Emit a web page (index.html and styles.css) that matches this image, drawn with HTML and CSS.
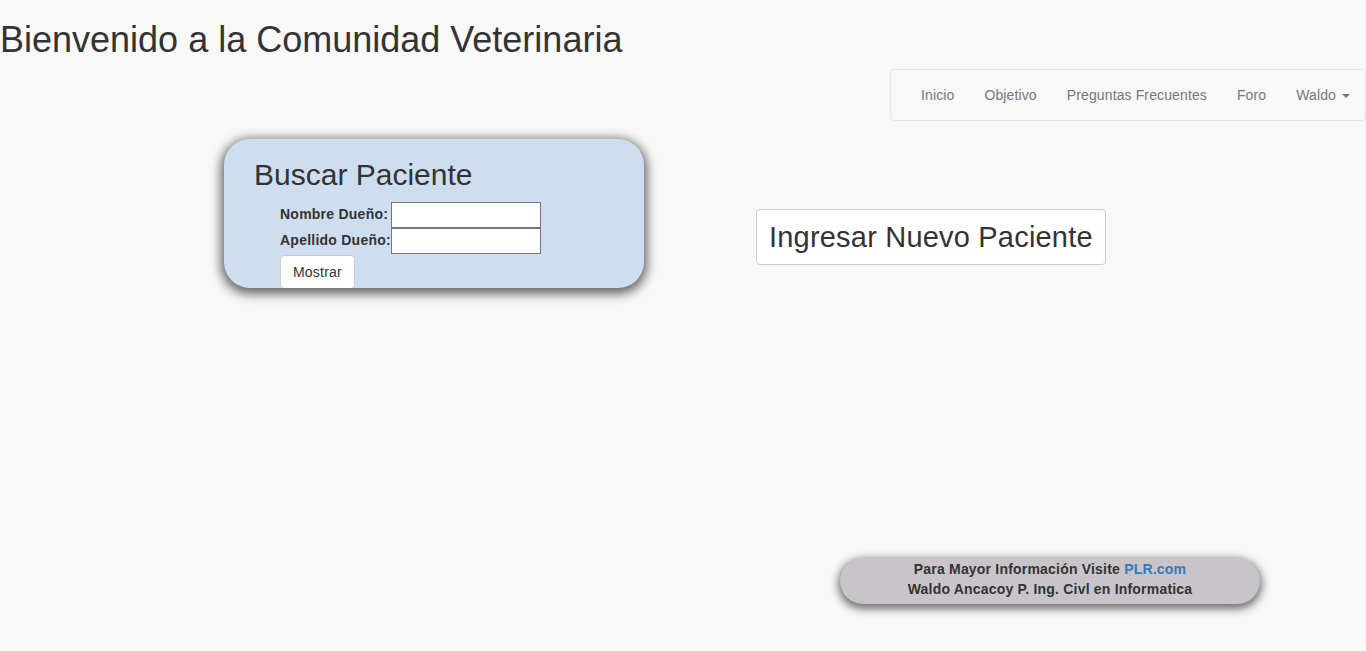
FILE: index.html
```html
<!DOCTYPE html>
<html lang="es">
<head>
<meta charset="utf-8">
<title>Comunidad Veterinaria</title>
<link rel="stylesheet" href="styles.css">
</head>
<body>
<h1 class="title">Bienvenido a la Comunidad Veterinaria</h1>
<div class="nav-row">
  <nav class="navbar">
    <ul class="nav">
      <li><a href="#">Inicio</a></li>
      <li><a href="#">Objetivo</a></li>
      <li><a href="#">Preguntas Frecuentes</a></li>
      <li><a href="#">Foro</a></li>
      <li><a href="#">Waldo <span class="caret"></span></a></li>
    </ul>
  </nav>
</div>
<div class="main-row">
  <div class="search-card">
    <h2 class="card-title">Buscar Paciente</h2>
    <form class="search-form">
      <div class="fields">
        <label>Nombre Dueño:</label><input type="text">
        <label>Apellido Dueño:</label><input type="text">
      </div>
      <button type="button" class="btn">Mostrar</button>
    </form>
  </div>
  <button type="button" class="btn btn-lg">Ingresar Nuevo Paciente</button>
</div>
<footer class="footer">
  <div>Para Mayor Información Visite <a href="#">PLR.com</a></div>
  <div>Waldo Ancacoy P. Ing. Civl en Informatica</div>
</footer>
</body>
</html>
```
FILE: styles.css
```css
html, body {
  margin: 0;
  padding: 0;
}
body {
  background: #f8f8f8;
  font-family: "Liberation Sans", Arial, sans-serif;
  font-size: 14px;
  color: #333;
  line-height: 1.42857;
  padding-bottom: 40px;
}
.title {
  margin: 20px 0 0 0;
  font-size: 36px;
  font-weight: 400;
  line-height: 40px;
}
.nav-row {
  display: flex;
  justify-content: flex-end;
  margin-top: 9px;
}
.navbar {
  border: 1px solid #e7e7e7;
  border-radius: 4px;
  background: #f8f8f8;
  padding: 0 0 0 15px;
  height: 50px;
}
.nav {
  list-style: none;
  margin: 0;
  padding: 0;
  display: flex;
}
.nav a {
  display: block;
  padding: 15px;
  line-height: 20px;
  color: #777;
  text-decoration: none;
  letter-spacing: 0.12px;
}
.caret {
  display: inline-block;
  width: 0;
  height: 0;
  margin-left: 2px;
  vertical-align: middle;
  border-top: 4px solid #777;
  border-left: 4px solid transparent;
  border-right: 4px solid transparent;
}
.main-row {
  display: flex;
  align-items: flex-start;
  margin-top: 18px;
  padding-left: 224px;
}
.search-card {
  width: 420px;
  height: 149px;
  box-sizing: border-box;
  background: #cedef0;
  border-radius: 26px;
  box-shadow: 0 3px 11px 3px rgba(0,0,0,0.6);
  padding: 18px 0 0 30px;
  overflow: hidden;
}
.card-title {
  margin: 0;
  font-size: 30px;
  font-weight: 400;
  line-height: 36px;
}
.search-form {
  padding-left: 26px;
  margin-top: 9px;
}
.fields {
  display: grid;
  grid-template-columns: max-content 150px;
  grid-auto-rows: 26px;
  align-items: center;
}
.fields label {
  font-weight: bold;
  font-size: 14px;
  letter-spacing: 0.24px;
}
.fields input {
  width: 150px;
  height: 26px;
  box-sizing: border-box;
  border: 1px solid #767676;
  margin: 0;
  padding: 1px 2px;
  background: #fff;
  font-family: inherit;
}
.search-form .btn {
  margin-top: 1px;
}
.btn {
  background: #fff;
  border: 1px solid #ccc;
  border-radius: 4px;
  color: #333;
  font-family: "Liberation Sans", Arial, sans-serif;
  font-size: 14px;
  line-height: 20px;
  padding: 6px 12px;
  height: 34px;
  box-sizing: border-box;
  letter-spacing: 0.2px;
}
.btn-lg {
  margin-left: 112px;
  margin-top: 70px;
  font-size: 29px;
  height: 56px;
  line-height: 40px;
  padding: 7px 12px;
  letter-spacing: 0.2px;
}
.footer {
  width: 420px;
  height: 46px;
  box-sizing: border-box;
  margin: 270px 0 0 840px;
  background: #c8c4ca;
  border-radius: 23px;
  box-shadow: 0 3px 8px 2px rgba(0,0,0,0.55);
  text-align: center;
  font-weight: bold;
  font-size: 14px;
  line-height: 20px;
  padding-top: 1px;
  color: #333;
  letter-spacing: 0.2px;
}
.footer a {
  color: #337ab7;
  text-decoration: none;
}
```
